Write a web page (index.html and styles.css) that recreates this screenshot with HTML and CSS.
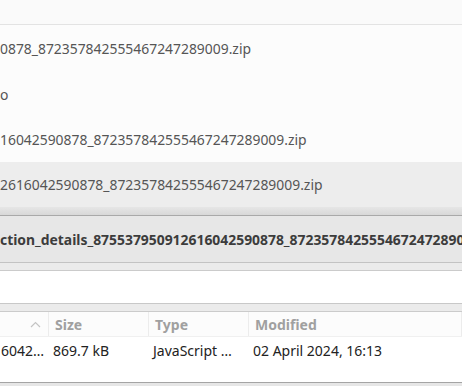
FILE: index.html
```html
<!DOCTYPE html>
<html lang="en">
<head>
  <meta charset="UTF-8">
  <title>Files</title>
  <link rel="stylesheet" href="styles.css">
</head>
<body>
  <div class="top"></div>

  <!-- recent files list -->
  <div class="list">
    <div class="item">0878_872357842555467247289009.zip</div>
    <div class="item">o</div>
    <div class="item">16042590878_872357842555467247289009.zip</div>
    <div class="item active">2616042590878_872357842555467247289009.zip</div>
  </div>

  <div class="shade"></div>
  <div class="pathbar"><span>ction_details_875537950912616042590878_8723578425554672472890</span></div>
  <div class="strip"></div>
  <div class="blank"></div>
  <div class="strip"></div>

  <!-- file table -->
  <div class="table">
    <div class="head">
      <div class="cell name">
        <svg width="11" height="7" viewBox="0 0 11 7"><polyline points="1,6 5.5,1.5 10,6" fill="none" stroke="#c4c4c4" stroke-width="1.2"/></svg>
      </div>
      <div class="cell size">Size</div>
      <div class="cell type">Type</div>
      <div class="cell mod">Modified</div>
    </div>
    <div class="row">
      <div class="cell name">6042…</div>
      <div class="cell size">869.7 kB</div>
      <div class="cell type">JavaScript …</div>
      <div class="cell mod">02 April 2024, 16:13</div>
    </div>
  </div>
  <div class="bottom"></div>
</body>
</html>
```

FILE: styles.css
```css
* {
  box-sizing: border-box;
}
body {
  margin: 0;
  width: 462px;
  height: 386px;
  overflow: hidden;
  font-family: "Noto Sans", "Open Sans", sans-serif;
  background-color: #e8e8e8;
}
.top {
  height: 25px;
  background-color: #fafafa;
  border-bottom: 1px solid #e3e3e3;
}
.list {
  background-color: #fcfcfc;
}
.item {
  height: 46px;
  display: flex;
  align-items: center;
  font-size: 13.9px;
  color: #555;
  white-space: nowrap;
  overflow: hidden;
}
.item:nth-child(3) {
  height: 45px;
}
.item.active {
  height: 45px;
  background-color: #ededed;
}
.shade {
  height: 9px;
  background: linear-gradient(#e6e6e6, #d8d8d8);
  border-bottom: 1px solid #a9a9a9;
}
.pathbar {
  height: 47px;
  display: flex;
  align-items: center;
  background-color: #e7e7e7;
  border-bottom: 1px solid #c3c3c3;
  font-size: 13.9px;
  font-weight: bold;
  color: #3c3c3c;
  white-space: nowrap;
  overflow: hidden;
}
.strip {
  height: 8px;
  background-color: #ebebeb;
  border-bottom: 1px solid #cbcbcb;
}
.blank {
  height: 33px;
  background-color: #fff;
  border-bottom: 1px solid #c8c8c8;
}
.table {
  height: 71px;
  background-color: #fff;
  border-bottom: 1px solid #a4a4a4;
  font-size: 14px;
}
.head {
  height: 25px;
  display: flex;
  background-color: #fcfcfc;
  border-bottom: 1px solid #f0f0f0;
  color: #a0a0a0;
  font-weight: bold;
}
.head .cell {
  border-right: 1px solid #ececec;
  padding-left: 6px;
}
.row {
  height: 26px;
  display: flex;
  color: #222;
}
.cell {
  display: flex;
  align-items: center;
  padding-left: 4px;
  white-space: nowrap;
  overflow: hidden;
}
.head .name,
.row .name {
  width: 49px;
  padding-left: 0;
  justify-content: flex-end;
  padding-right: 7px;
}
.row .name {
  padding-right: 5px;
}
.size {
  width: 100px;
}
.type {
  width: 100px;
}
.mod {
  flex: 1;
}
.bottom {
  height: 3px;
  background-color: #e6e6e6;
}
```
